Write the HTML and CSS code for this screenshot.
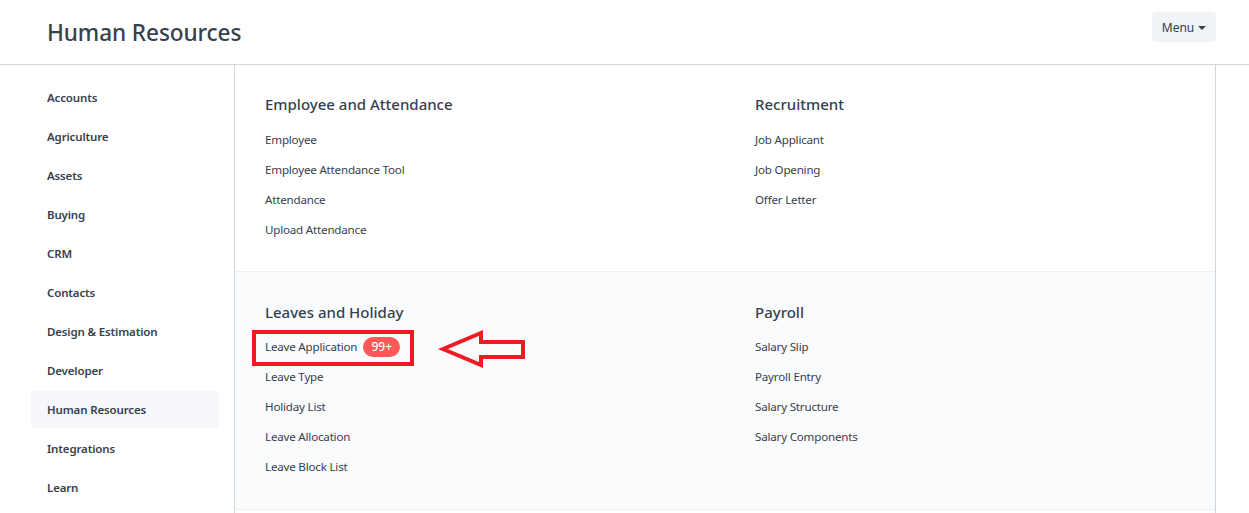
FILE: index.html
```html
<!DOCTYPE html>
<html lang="en">
<head>
<meta charset="utf-8">
<title>Human Resources</title>
<link rel="stylesheet" href="styles.css">
</head>
<body>
<header class="page-head">
  <h1 class="title">Human Resources</h1>
  <button class="menu-btn">Menu <span class="caret"></span></button>
</header>
<div class="layout">
  <nav class="sidebar">
    <a class="side-item">Accounts</a>
    <a class="side-item">Agriculture</a>
    <a class="side-item">Assets</a>
    <a class="side-item">Buying</a>
    <a class="side-item">CRM</a>
    <a class="side-item">Contacts</a>
    <a class="side-item">Design &amp; Estimation</a>
    <a class="side-item">Developer</a>
    <a class="side-item active">Human Resources</a>
    <a class="side-item">Integrations</a>
    <a class="side-item">Learn</a>
  </nav>
  <main class="content">
    <section class="module-section first">
      <div class="col">
        <h3 class="col-title">Employee and Attendance</h3>
        <a class="link">Employee</a>
        <a class="link">Employee Attendance Tool</a>
        <a class="link">Attendance</a>
        <a class="link">Upload Attendance</a>
      </div>
      <div class="col">
        <h3 class="col-title">Recruitment</h3>
        <a class="link">Job Applicant</a>
        <a class="link">Job Opening</a>
        <a class="link">Offer Letter</a>
      </div>
    </section>
    <section class="module-section alt">
      <div class="col">
        <h3 class="col-title">Leaves and Holiday</h3>
        <a class="link highlight">Leave Application <span class="badge">99+</span>
          <span class="callout-box"></span>
          <svg class="callout-arrow" width="92" height="42" viewBox="0 0 92 42">
            <polygon points="6,20 44,4 44,13 86,13 86,28 44,28 44,36" fill="none" stroke="#ed1c24" stroke-width="4" stroke-linejoin="miter"/>
          </svg>
        </a>
        <a class="link">Leave Type</a>
        <a class="link">Holiday List</a>
        <a class="link">Leave Allocation</a>
        <a class="link">Leave Block List</a>
      </div>
      <div class="col">
        <h3 class="col-title">Payroll</h3>
        <a class="link">Salary Slip</a>
        <a class="link">Payroll Entry</a>
        <a class="link">Salary Structure</a>
        <a class="link">Salary Components</a>
      </div>
    </section>
  </main>
</div>
</body>
</html>
```
FILE: styles.css
```css
* { box-sizing: border-box; }
html, body { margin: 0; padding: 0; background: #fff; }
body {
  font-family: "Noto Sans", "Liberation Sans", sans-serif;
  color: #36414c;
  overflow: hidden;
}
.page-head {
  height: 65px;
  border-bottom: 1px solid #d1d8dd;
  display: flex;
  align-items: center;
  justify-content: space-between;
  padding: 0 33px 0 47px;
}
.title {
  margin: 0;
  font-size: 22.6px;
  font-weight: 500;
  color: #36414c;
  letter-spacing: -0.1px;
  padding-top: 1px;
}
.menu-btn {
  align-self: flex-start;
  margin-top: 12px;
  height: 30px;
  width: 64px;
  border: none;
  border-radius: 4px;
  background: #f0f4f7;
  color: #36414c;
  font-family: inherit;
  font-size: 12px;
  padding: 0;
  display: flex;
  align-items: center;
  justify-content: center;
  gap: 4px;
}
.caret {
  width: 0; height: 0;
  border-left: 4px solid transparent;
  border-right: 4px solid transparent;
  border-top: 4px solid #36414c;
  margin-top: 1px;
}
.layout {
  display: flex;
  padding-left: 31px;
}
.sidebar {
  width: 203px;
  flex: none;
  padding-top: 14px;
  display: flex;
  flex-direction: column;
  gap: 2px;
  padding-right: 15px;
}
.side-item {
  height: 37px;
  display: flex;
  align-items: center;
  padding-left: 16px;
  font-size: 11.5px;
  letter-spacing: -0.15px;
  font-weight: 600;
  color: #36414c;
  border-radius: 4px;
}
.side-item.active { background: #f5f7fa; }
.content {
  width: 982px;
  flex: none;
  border-left: 1px solid #d1d8dd;
  border-right: 1px solid #d1d8dd;
  min-height: 460px;
}
.module-section {
  display: grid;
  grid-template-columns: 490px 490px;
  padding: 29px 0 27px;
  border-bottom: 1px solid #ebeff2;
}
.module-section.first { padding-bottom: 26px; }
.module-section.first .col-title { margin-bottom: 11px; }
.module-section.alt {
  background: #fafbfc;
  padding-top: 30px;
}
.col {
  padding-left: 30px;
  display: flex;
  flex-direction: column;
  align-items: flex-start;
}
.col-title {
  margin: 0 0 10px;
  font-size: 15px;
  font-weight: 500;
  line-height: 20px;
  color: #36414c;
}
.link {
  font-size: 11.6px;
  letter-spacing: -0.2px;
  line-height: 18px;
  height: 30px;
  display: flex;
  align-items: center;
  color: #36414c;
}
.highlight { position: relative; }
.badge {
  display: inline-flex;
  align-items: center;
  justify-content: center;
  width: 37px;
  height: 20px;
  margin-left: 6px;
  border-radius: 10px;
  background: #ff5858;
  color: #fff;
  font-size: 12px;
  letter-spacing: 0;
  font-weight: 500;
}
.callout-box {
  position: absolute;
  left: -13px;
  top: -2px;
  width: 162px;
  height: 36px;
  border: 4px solid #ed1c24;
}
.callout-arrow {
  position: absolute;
  left: 172px;
  top: -3px;
}
```
